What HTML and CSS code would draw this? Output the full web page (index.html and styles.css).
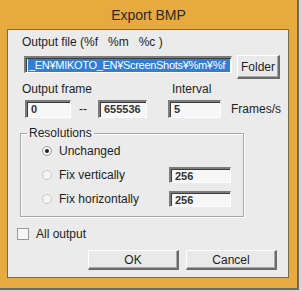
FILE: index.html
```html
<!DOCTYPE html>
<html lang="en">
<head>
  <meta charset="UTF-8" />
  <title>Export BMP</title>
  <link rel="stylesheet" href="styles.css">
</head>
<body>
  <div class="window">
    <div class="titlebar">Export BMP</div>
    <div class="client">
      <div class="label-row first">Output file (%f&nbsp;&nbsp;&nbsp;%m&nbsp;&nbsp;&nbsp;%c )</div>

      <div class="path-row">
        <div class="field path"><span class="sel">_EN¥MIKOTO_EN¥ScreenShots¥%m¥%f</span></div>
        <button class="btn folder">Folder</button>
      </div>

      <div class="label-row frame-labels">
        <span class="lbl-frame">Output frame</span>
        <span class="lbl-interval">Interval</span>
      </div>

      <div class="frame-row">
        <div class="field f-start">0</div>
        <span class="dash">--</span>
        <div class="field f-end">655536</div>
        <div class="field f-interval">5</div>
        <span class="unit">Frames/s</span>
      </div>

      <fieldset class="group">
        <legend>Resolutions</legend>
        <div class="opt">
          <span class="radio checked"></span>
          <span class="opt-text">Unchanged</span>
        </div>
        <div class="opt">
          <span class="radio"></span>
          <span class="opt-text">Fix vertically</span>
          <div class="field f-size">256</div>
        </div>
        <div class="opt">
          <span class="radio"></span>
          <span class="opt-text">Fix horizontally</span>
          <div class="field f-size">256</div>
        </div>
      </fieldset>

      <div class="check-row">
        <span class="checkbox"></span>
        <span>All output</span>
      </div>

      <div class="btn-row">
        <button class="btn big">OK</button>
        <button class="btn big">Cancel</button>
      </div>
    </div>
  </div>
</body>
</html>
```

FILE: styles.css
```css
body { margin:0; background:#d4d4d4; font-family:"Liberation Sans", Arial, sans-serif; font-size:12px; color:#1e1e1e; }
.window { width:297px; height:288px; background:#e6aa3e; border-right:2px solid #6e6a62; border-bottom:2px solid #6e6a62; box-sizing:content-box; display:flex; flex-direction:column; }
.titlebar { height:29px; line-height:31px; text-align:center; font-size:14px; color:#2a2a2a; }
.client { margin-left:7px; width:280px; height:247px; background:#ebebeb; border:1px solid #7a6a4c; display:flex; flex-direction:column; }

.label-row { height:14px; line-height:14px; white-space:nowrap; }
.first { margin:5px 0 0 14px; }

.field { background:#f7f7f7; border-top:2px solid #7c7c7c; border-left:2px solid #7c7c7c; border-bottom:1px solid #fff; border-right:1px solid #fff; box-shadow:inset 1px 1px 0 #3c3c3c; box-sizing:border-box; line-height:14px; padding-left:4px; white-space:nowrap; overflow:hidden; font-weight:bold; font-size:11px; color:#333; }

.path-row { display:flex; align-items:flex-start; margin:6px 0 0 16px; height:24px; }
.path { width:208px; height:17px; margin-top:1px; padding:1px 1px 0 2px; font-weight:normal; font-size:11px; letter-spacing:-0.3px; }
.sel { display:block; background:#2f7ed8; color:#fff; height:13px; line-height:13px; padding-left:1px; }

.btn { font-family:inherit; font-size:12px; color:#1e1e1e; background:#e9e9e9; border-top:1px solid #fff; border-left:1px solid #fff; border-right:2px solid #6a6a6a; border-bottom:2px solid #6a6a6a; box-shadow:inset -1px -1px 0 #a8a8a8; padding:0; }
.folder { width:43px; height:24px; margin-left:5px; flex:none; }

.frame-labels { margin:3px 0 0 14px; display:flex; }
.lbl-frame { width:150px; }

.frame-row { display:flex; align-items:center; margin:4px 0 0 17px; height:18px; }
.f-start { width:46px; height:18px; }
.dash { margin:0 11px 0 8px; }
.f-end { width:49px; height:18px; }
.f-interval { width:53px; height:18px; margin-left:21px; }
.unit { margin-left:10px; }

.group { margin:8px 0 0 12px; width:224px; height:91px; box-sizing:border-box; padding:2px 0 0 6px; border:1px solid #a6a6a6; box-shadow:1px 1px 0 #fff, inset 1px 1px 0 #fff; display:flex; flex-direction:column; gap:6px; }
.group legend { padding:0 2px; line-height:14px; }
.opt { display:flex; align-items:center; height:18px; margin-left:15px; }
.radio { width:10px; height:10px; border-radius:50%; background:#f4f4f4; border:1px solid #c8c8c8; box-sizing:border-box; position:relative; }
.radio.checked { border-color:#9a9a9a; }
.radio.checked::after { content:""; position:absolute; left:2px; top:2px; width:4px; height:4px; border-radius:50%; background:#222; }
.opt-text { width:110px; margin-left:7px; }
.f-size { width:62px; height:16px; }

.check-row { display:flex; align-items:center; gap:7px; margin:10px 0 0 9px; height:14px; }
.checkbox { width:12px; height:12px; background:#f6f6f6; border:1px solid #9a9a9a; box-sizing:border-box; }

.btn-row { display:flex; gap:7px; margin:9px 0 0 80px; }
.big { width:91px; height:20px; }
```
